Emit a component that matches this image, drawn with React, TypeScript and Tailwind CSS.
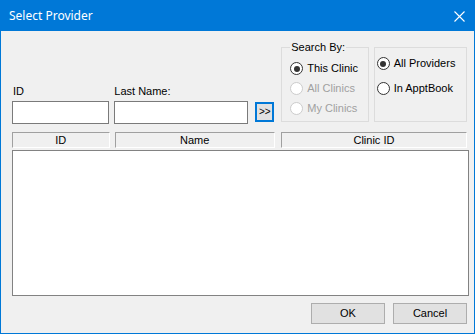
const ui = "font-['Liberation_Sans',Arial,sans-serif] text-[11px] leading-[13px] text-black"

function Radio({ label, checked, disabled }: { label: string; checked?: boolean; disabled?: boolean }) {
  return (
    <div className="flex items-center gap-[4px] h-[13px]">
      <span
        className={
          "relative w-[13px] h-[13px] rounded-full border bg-white shrink-0 " +
          (disabled ? "border-[#cccccc] bg-[#f8f8f8]" : "border-[#333333]")
        }
      >
        {checked && <span className="absolute left-[2.5px] top-[2.5px] w-[6px] h-[6px] rounded-full bg-[#333333]" />}
      </span>
      <span className={disabled ? "text-[#a0a0a0]" : "text-black"}>{label}</span>
    </div>
  )
}

function Header({ label, width }: { label: string; width: string }) {
  return (
    <div
      className={
        "h-[16px] flex items-center justify-center border-t border-l border-t-[#a0a0a0] border-l-[#a0a0a0] border-r border-b border-r-white border-b-white bg-[#f0f0f0] " +
        width
      }
    >
      {label}
    </div>
  )
}

export default function App() {
  return (
    <div className={"w-[475px] h-[334px] flex flex-col border border-[#0078d7] bg-[#f0f0f0] " + ui}>
      {/* title bar */}
      <div className="h-[30px] bg-[#0078d7] flex items-center justify-between pl-[8px] pr-[9px] shrink-0">
        <span className="font-['Noto_Sans',sans-serif] text-[12px] text-white leading-none">Select Provider</span>
        <svg width="11" height="11" viewBox="0 0 11 11" className="mt-[1px]">
          <path d="M0.5 0.5 L10.5 10.5 M10.5 0.5 L0.5 10.5" stroke="white" strokeWidth="1.1" />
        </svg>
      </div>

      {/* content */}
      <div className="flex-1 flex flex-col pl-[11px] pr-[7px] pt-[16px]">
        <div className="flex items-start">
          <div className="flex flex-col mt-[38px] w-[98px]">
            <span className="pl-[1px] h-[13px]">ID</span>
            <div className="mt-[3px] h-[23px] bg-white border border-[#7a7a7a]" />
          </div>
          <div className="flex flex-col mt-[38px] ml-[5px] w-[135px]">
            <span className="h-[13px]">Last Name:</span>
            <div className="mt-[3px] h-[23px] bg-white border border-[#7a7a7a]" />
          </div>
          <button className="mt-[55px] ml-[7px] w-[19px] h-[20px] border-2 border-[#0078d7] bg-[#e1e1e1] flex items-center justify-center text-[10px] leading-none pb-[1px]">
            &gt;&gt;
          </button>

          {/* Search By group */}
          <div className="relative ml-[7px] w-[88px] h-[75px] border border-[#dcdcdc] flex flex-col pl-[8px] pt-[14px] gap-[7px]">
            <span className="absolute -top-[7px] left-[8px] px-[1px] bg-[#f0f0f0]">Search By:</span>
            <Radio label="This Clinic" checked />
            <Radio label="All Clinics" disabled />
            <Radio label="My Clinics" disabled />
          </div>

          {/* provider group */}
          <div className="ml-[5px] w-[94px] h-[75px] border border-[#dcdcdc] flex flex-col pl-[2px] pt-[9px] gap-[12px]">
            <Radio label="All Providers" checked />
            <Radio label="In ApptBook" />
          </div>
        </div>

        <div className="flex mt-[8px]">
          <Header label="ID" width="w-[98px]" />
          <div className="w-[5px]" />
          <Header label="Name" width="w-[161px]" />
          <div className="w-[6px]" />
          <Header label="Clinic ID" width="w-[187px]" />
        </div>

        <div className="mt-[2px] w-[457px] h-[146px] bg-white border border-[#828282]" />

        <div className="flex justify-end gap-[8px] mt-[7px]">
          <button className="w-[74px] h-[21px] bg-[#e1e1e1] border border-[#adadad] flex items-center justify-center">
            OK
          </button>
          <button className="w-[74px] h-[21px] bg-[#e1e1e1] border border-[#adadad] flex items-center justify-center">
            Cancel
          </button>
        </div>
      </div>
    </div>
  )
}
